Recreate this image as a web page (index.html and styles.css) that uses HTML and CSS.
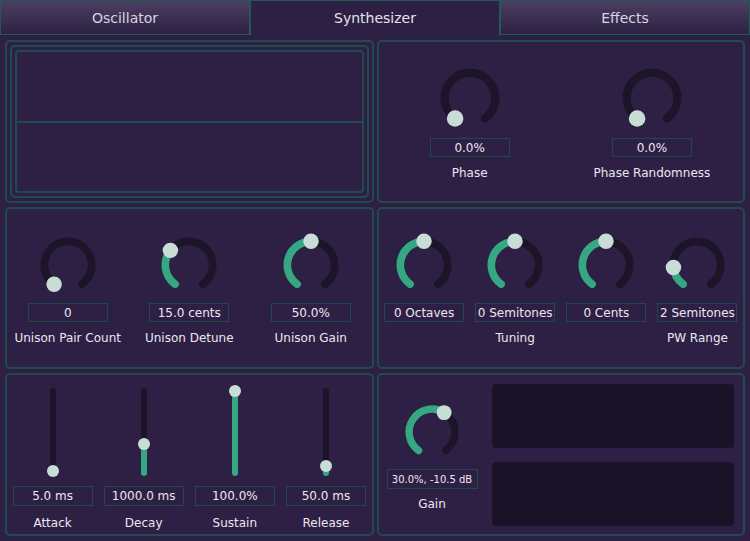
FILE: index.html
```html
<!DOCTYPE html>
<html>
<head>
<meta charset="utf-8">
<link rel="stylesheet" href="styles.css">
</head>
<body>
<div class="tabs">
  <div class="tab">Oscillator</div>
  <div class="tab active">Synthesizer</div>
  <div class="tab">Effects</div>
</div>
<div class="main">
  <div class="panel scope">
    <div class="frame2">
      <div class="frame3">
        <div class="half"></div>
        <div class="divider"></div>
        <div class="half"></div>
      </div>
    </div>
  </div>

  <div class="panel knobs two row1">
    <div class="cell">
      <svg class="knob k62" viewBox="0 0 60 60"><path class="trk" d="M15.6 49.82A24.5 24.5 0 1 1 44.4 49.82"/><circle class="hdl" cx="15.6" cy="49.82" r="8"/></svg>
      <div class="val">0.0%</div>
      <div class="lbl">Phase</div>
    </div>
    <div class="cell">
      <svg class="knob k62" viewBox="0 0 60 60"><path class="trk" d="M15.6 49.82A24.5 24.5 0 1 1 44.4 49.82"/><circle class="hdl" cx="15.6" cy="49.82" r="8"/></svg>
      <div class="val">0.0%</div>
      <div class="lbl">Phase Randomness</div>
    </div>
  </div>

  <div class="panel knobs three row2">
    <div class="cell">
      <svg class="knob k58" viewBox="0 0 60 60"><path class="trk" d="M15.6 49.82A24.5 24.5 0 1 1 44.4 49.82"/><circle class="hdl" cx="15.6" cy="49.82" r="8"/></svg>
      <div class="val">0</div>
      <div class="lbl">Unison Pair Count</div>
    </div>
    <div class="cell">
      <svg class="knob k58" viewBox="0 0 60 60"><path class="trk" d="M15.6 49.82A24.5 24.5 0 1 1 44.4 49.82"/><path class="fill" d="M15.6 49.82A24.5 24.5 0 0 1 10.74 14.86"/><circle class="hdl" cx="10.74" cy="14.86" r="8"/></svg>
      <div class="val">15.0 cents</div>
      <div class="lbl">Unison Detune</div>
    </div>
    <div class="cell">
      <svg class="knob k58" viewBox="0 0 60 60"><path class="trk" d="M15.6 49.82A24.5 24.5 0 1 1 44.4 49.82"/><path class="fill" d="M15.6 49.82A24.5 24.5 0 0 1 30 5.5"/><circle class="hdl" cx="30" cy="5.5" r="8"/></svg>
      <div class="val">50.0%</div>
      <div class="lbl">Unison Gain</div>
    </div>
  </div>

  <div class="panel knobs four row2">
    <div class="cell">
      <svg class="knob k58" viewBox="0 0 60 60"><path class="trk" d="M15.6 49.82A24.5 24.5 0 1 1 44.4 49.82"/><path class="fill" d="M15.6 49.82A24.5 24.5 0 0 1 30 5.5"/><circle class="hdl" cx="30" cy="5.5" r="8"/></svg>
      <div class="val">0 Octaves</div>
    </div>
    <div class="cell">
      <svg class="knob k58" viewBox="0 0 60 60"><path class="trk" d="M15.6 49.82A24.5 24.5 0 1 1 44.4 49.82"/><path class="fill" d="M15.6 49.82A24.5 24.5 0 0 1 30 5.5"/><circle class="hdl" cx="30" cy="5.5" r="8"/></svg>
      <div class="val">0 Semitones</div>
    </div>
    <div class="cell">
      <svg class="knob k58" viewBox="0 0 60 60"><path class="trk" d="M15.6 49.82A24.5 24.5 0 1 1 44.4 49.82"/><path class="fill" d="M15.6 49.82A24.5 24.5 0 0 1 30 5.5"/><circle class="hdl" cx="30" cy="5.5" r="8"/></svg>
      <div class="val">0 Cents</div>
    </div>
    <div class="cell">
      <svg class="knob k58" viewBox="0 0 60 60"><path class="trk" d="M15.6 49.82A24.5 24.5 0 1 1 44.4 49.82"/><path class="fill" d="M15.6 49.82A24.5 24.5 0 0 1 5.63 32.56"/><circle class="hdl" cx="5.63" cy="32.56" r="8"/></svg>
      <div class="val">2 Semitones</div>
    </div>
    <div class="lbl span3">Tuning</div>
    <div class="lbl">PW Range</div>
  </div>

  <div class="panel sliders">
    <div class="cell">
      <svg class="slider" viewBox="0 0 20 96"><line class="strk" x1="10" y1="8" x2="10" y2="90"/><circle class="hdl" cx="10" cy="88" r="6"/></svg>
      <div class="val">5.0 ms</div>
      <div class="lbl">Attack</div>
    </div>
    <div class="cell">
      <svg class="slider" viewBox="0 0 20 96"><line class="strk" x1="10" y1="8" x2="10" y2="90"/><line class="sfill" x1="10" y1="61" x2="10" y2="90"/><circle class="hdl" cx="10" cy="61" r="6"/></svg>
      <div class="val">1000.0 ms</div>
      <div class="lbl">Decay</div>
    </div>
    <div class="cell">
      <svg class="slider" viewBox="0 0 20 96"><line class="strk" x1="10" y1="8" x2="10" y2="90"/><line class="sfill" x1="10" y1="8" x2="10" y2="90"/><circle class="hdl" cx="10" cy="8" r="6"/></svg>
      <div class="val">100.0%</div>
      <div class="lbl">Sustain</div>
    </div>
    <div class="cell">
      <svg class="slider" viewBox="0 0 20 96"><line class="strk" x1="10" y1="8" x2="10" y2="90"/><line class="sfill" x1="10" y1="83" x2="10" y2="90"/><circle class="hdl" cx="10" cy="83" r="6"/></svg>
      <div class="val">50.0 ms</div>
      <div class="lbl">Release</div>
    </div>
  </div>

  <div class="panel output">
    <div class="gaincol">
      <svg class="knob k56" viewBox="0 0 60 60"><path class="trk" d="M15.6 49.82A24.5 24.5 0 1 1 44.4 49.82"/><path class="fill" d="M15.6 49.82A24.5 24.5 0 0 1 42.98 9.22"/><circle class="hdl" cx="42.98" cy="9.22" r="8"/></svg>
      <div class="val wide">30.0%, -10.5 dB</div>
      <div class="lbl">Gain</div>
    </div>
    <div class="meters">
      <div class="meter"></div>
      <div class="meter"></div>
    </div>
  </div>
</div>
</body>
</html>
```

FILE: styles.css
```css
html, body {
  margin: 0;
  padding: 0;
}
body {
  width: 750px;
  height: 541px;
  background: #2e2044;
  font-family: "DejaVu Sans", sans-serif;
  color: #ebe7f0;
  overflow: hidden;
}
.tabs {
  display: flex;
  height: 35px;
}
.tab {
  flex: 1;
  box-sizing: border-box;
  height: 35px;
  display: flex;
  align-items: center;
  justify-content: center;
  font-size: 14px;
  color: #d9d3e1;
  background: linear-gradient(#4b3e62, #2e2244);
  border: 1px solid #1d5c56;
}
.tab.active {
  background: #2e2044;
  border-bottom: none;
  color: #e6e2ec;
}
.main {
  display: grid;
  grid-template-columns: 1fr 1fr;
  grid-template-rows: 163px 162px 163px;
  gap: 4px 3px;
  padding: 5px;
}
.panel {
  box-sizing: border-box;
  border: 2px solid #1f4a4e;
  border-radius: 5px;
}
.scope {
  padding: 3px;
  display: flex;
}
.frame2 {
  flex: 1;
  border: 2px solid #1f4a4e;
  border-radius: 5px;
  padding: 3px;
  display: flex;
}
.frame3 {
  flex: 1;
  border: 2px solid #1f4a4e;
  border-radius: 4px;
  display: flex;
  flex-direction: column;
}
.half {
  flex: 1;
}
.divider {
  height: 2px;
  background: #1f4a4e;
}
.knobs {
  display: grid;
  align-content: start;
}
.two { grid-template-columns: 1fr 1fr; padding-top: 25px; }
.three { grid-template-columns: 1fr 1fr 1fr; }
.four { grid-template-columns: 1fr 1fr 1fr 1fr; }
.row2 { padding-top: 27px; }
.sliders {
  display: grid;
  grid-template-columns: 1fr 1fr 1fr 1fr;
  align-content: start;
  padding-top: 8px;
}
.cell {
  display: flex;
  flex-direction: column;
  align-items: center;
}
.knob { display: block; overflow: visible; }
.k62 { width: 62px; height: 62px; }
.k58 { width: 58px; height: 58px; }
.k56 { width: 56px; height: 56px; }
.trk, .fill {
  fill: none;
  stroke-width: 8;
  stroke-linecap: round;
}
.trk { stroke: #1c1429; }
.fill { stroke: #36a783; }
.hdl { fill: #c8ddd6; }
.slider {
  display: block;
  width: 20px;
  height: 96px;
  overflow: visible;
}
.strk, .sfill {
  stroke-width: 6;
  stroke-linecap: round;
}
.strk { stroke: #1c1429; }
.sfill { stroke: #36a783; }
.val {
  box-sizing: border-box;
  width: 80px;
  height: 19px;
  margin-top: 9px;
  border: 1px solid #1f4a4c;
  font-size: 12px;
  line-height: 18px;
  text-align: center;
  color: #ebe7f0;
  white-space: nowrap;
}
.sliders .val {
  height: 20px;
  line-height: 19px;
  margin-top: 7px;
}
.lbl {
  margin-top: 9px;
  font-size: 12px;
  line-height: 15px;
  text-align: center;
  white-space: nowrap;
}
.sliders .lbl { margin-top: 10px; }
.span3 { grid-column: 1 / 4; }
.output {
  display: flex;
  padding: 9px 9px 8px 0;
}
.gaincol {
  width: 107px;
  display: flex;
  flex-direction: column;
  align-items: center;
  padding-top: 20px;
}
.val.wide {
  width: 91px;
  height: 20px;
  line-height: 19px;
  font-size: 10px;
}
.gaincol .lbl { margin-top: 8px; }
.meters {
  flex: 1;
  margin-left: 6px;
  display: flex;
  flex-direction: column;
  gap: 14px;
}
.meter {
  flex: 1;
  background: #1a1327;
  border-radius: 4px;
}
```
